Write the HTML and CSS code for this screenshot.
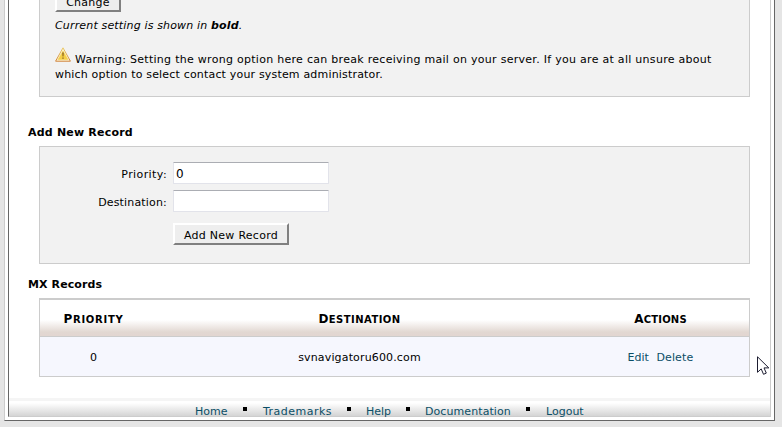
FILE: index.html
```html
<!DOCTYPE html>
<html lang="en">
<head>
<meta charset="utf-8">
<title>MX Entry Maintenance</title>
<link rel="stylesheet" href="styles.css">
</head>
<body>
<div class="frame">
  <div class="page">
    <main class="content">
      <section class="panel routing">
        <button class="btn change" type="button">Change</button>
        <p class="current">Current setting is shown in <b>bold</b>.</p>
        <p class="warning"><svg class="warn-icon" width="16" height="15" viewBox="0 0 16 15"><defs><linearGradient id="edge" x2="0" y2="1"><stop offset="0" stop-color="#eacb68"/><stop offset="1" stop-color="#cf8138"/></linearGradient></defs><path d="M8 .8 15.4 14.2H.6Z" fill="#fff8df" stroke="url(#edge)" stroke-linejoin="round"/><path d="M8 3.7 13.2 12.7H2.8Z" fill="#f5cf45" stroke="#f3d56c" stroke-width=".6"/><path d="M7.2 5.5h1.6L8.5 9.6h-1ZM7.3 10.5h1.4v1.3H7.3Z" fill="#8c6524"/></svg><span class="line1">Warning: Setting the wrong option here can break receiving mail on your server. If you are at all unsure about</span><br><span class="line2">which option to select contact your system administrator.</span></p>
      </section>

      <h2 class="title add-title">Add New Record</h2>
      <form class="panel add">
        <label class="lbl-p" for="priority">Priority:</label>
        <input id="priority" type="text" value="0">
        <label class="lbl-d" for="destination">Destination:</label>
        <input id="destination" type="text">
        <button class="btn submit" type="button">Add New Record</button>
      </form>

      <h2 class="title mx-title">MX Records</h2>
      <div class="records">
        <div class="row head">
          <div class="h-priority">Priority</div><div class="h-dest">Destination</div><div class="h-actions">Actions</div>
        </div>
        <div class="row data">
          <div>0</div><div class="dest">svnavigatoru600.com</div>
          <div class="actions"><a href="#">Edit</a><a class="delete" href="#">Delete</a></div>
        </div>
      </div>
    </main>
    <footer class="footer">
      <a href="#">Home</a><i></i><a class="f-trade" href="#">Trademarks</a><i></i><a href="#">Help</a><i></i><a class="f-docs" href="#">Documentation</a><i></i><a href="#">Logout</a>
    </footer>
  </div>
</div>
<svg class="pointer" width="13" height="20" viewBox="0 0 13 20"><path d="M.5 .8V16.3L4.2 12.9 6.5 18.3 9.3 17.1 7 11.9H11.8Z" fill="#fff" stroke="#1c1c30"/></svg>
</body>
</html>
```
FILE: styles.css
```css
* { box-sizing: border-box; }
body {
  margin: 0;
  height: 427px;
  overflow: hidden;
  background: #e5e5e5;
  color: #000;
  font: 11px/15px Verdana, "DejaVu Sans", sans-serif;
}
a { color: #0b4e66; text-decoration: none; }
p, h2 { margin: 0; }

.frame {
  width: 771px;
  height: 421px;
  margin-left: 4px;
  padding: 0 3px 3px;
  background: #fff;
  border: solid;
  border-width: 0 1px 1px;
  border-color: #666 #666 #666 #ccc;
}
.page {
  height: 417px;
  border: solid;
  border-width: 0 1px 1px;
  border-color: #ccc #ccc #ccc #666;
}
.content { height: 398px; padding: 0 20px 0 19px; }

.panel {
  margin-left: 11px;
  background: #f2f2f2;
  border: 1px solid #ccc;
}
.routing {
  display: flow-root;
  height: 97px;
  padding: 0 15px;
  border-top: 0;
}
.btn {
  display: block;
  height: 22px;
  padding: 2px 0 0;
  background: #eee;
  border: 2px solid;
  border-color: #fff #808080 #808080 #fff;
  color: #000;
  font: inherit;
  letter-spacing: .27px;
}
.change { width: 66px; margin-top: -10px; }
.current { margin-top: 6px; font-style: italic; letter-spacing: .16px; white-space: nowrap; }
.warning { margin-top: 18px; white-space: nowrap; }
.warn-icon { display: inline-block; margin: -4px 4px 0 0; vertical-align: 1px; }
.line1 { letter-spacing: .284px; }
.line2 { letter-spacing: .18px; }

.title { font-size: 11px; line-height: 15px; font-weight: bold; white-space: nowrap; }
.add-title { margin-top: 28px; letter-spacing: .2px; }
.add {
  display: grid;
  grid-template-columns: 127px 156px;
  grid-template-rows: 22px 22px 22px;
  column-gap: 6px;
  height: 118px;
  margin-top: 6px;
  padding-top: 15px;
  row-gap: 6px;
}
.add label { text-align: right; line-height: 26px; white-space: nowrap; }
.lbl-p { letter-spacing: .4px; }
.lbl-d { letter-spacing: .17px; }
.add input {
  width: 156px;
  height: 22px;
  padding: 1px 1px 0 2px;
  border: 1px solid #e2e3ea;
  border-top-color: #abadb3;
  border-radius: 1px;
  background: #fff;
  font: 12px/19px Verdana, "DejaVu Sans", sans-serif;
  color: #000;
}
.submit { grid-column: 2; width: 116px; margin-top: 5px; }

.mx-title { margin-top: 13px; letter-spacing: .1px; }
.records {
  height: 79px;
  margin: 6px 0 0 11px;
  border: 1px solid #ccc;
  border-top-width: 2px;
}
.row {
  display: grid;
  grid-template-columns: 107px 425px 1fr;
  align-items: center;
  text-align: center;
  white-space: nowrap;
}
.head {
  height: 37px;
  padding-top: 2px;
  border-bottom: 1px solid #ccc;
  background: linear-gradient(#fff 0 20px, #e2d8d2 32px, #e2d6d1);
  font-size: 10px;
  font-weight: bold;
  text-transform: uppercase;
}
.head div::first-letter { font-size: 12px; }
.h-priority { letter-spacing: .75px; }
.h-dest { letter-spacing: .45px; }
.h-actions { letter-spacing: .2px; }
.data { height: 39px; background: #f6f7fe; padding-top: 2px; }
.dest { letter-spacing: .15px; }
.actions { display: flex; justify-content: center; gap: 7.5px; }
.delete { letter-spacing: .15px; }

.footer {
  display: grid;
  grid-template-columns: 33px 5px 69px 4px 25px 4px 86px 5px 38px;
  column-gap: 15px;
  height: 18px;
  padding: 6px 0 0 186px;
  background: linear-gradient(#f5f5f5 0 3px, #fff 3px 5px, #d4d4d4 18px);
  white-space: nowrap;
}
.footer i { width: 4px; height: 4px; margin-top: 3px; background: #000; }
.f-trade { letter-spacing: .48px; }
.f-docs { letter-spacing: .08px; }

.pointer { position: absolute; left: 757px; top: 356px; }
```
